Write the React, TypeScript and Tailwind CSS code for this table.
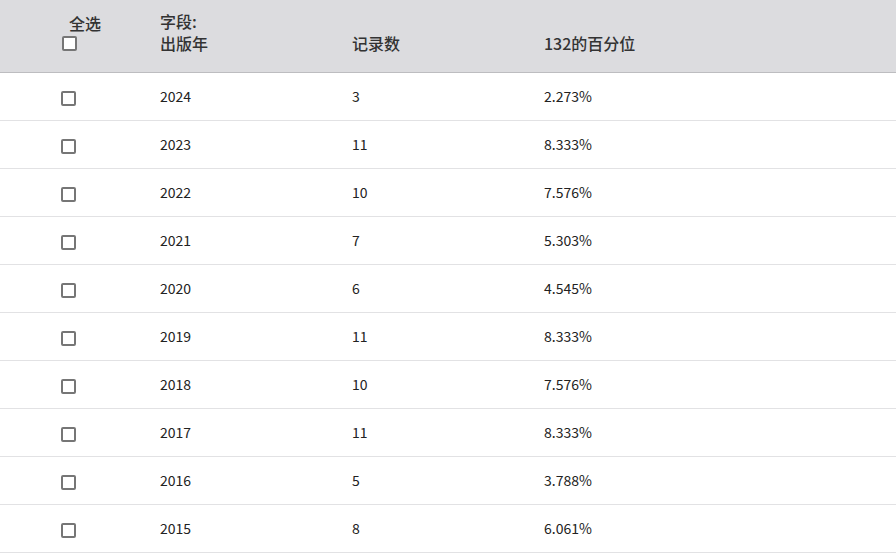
const rows = [
  { year: '2024', count: '3', pct: '2.273%' },
  { year: '2023', count: '11', pct: '8.333%' },
  { year: '2022', count: '10', pct: '7.576%' },
  { year: '2021', count: '7', pct: '5.303%' },
  { year: '2020', count: '6', pct: '4.545%' },
  { year: '2019', count: '11', pct: '8.333%' },
  { year: '2018', count: '10', pct: '7.576%' },
  { year: '2017', count: '11', pct: '8.333%' },
  { year: '2016', count: '5', pct: '3.788%' },
  { year: '2015', count: '8', pct: '6.061%' },
];

function Box() {
  return <span className="block w-[15px] h-[15px] border-2 border-[#767676] rounded-[2px] bg-white" />;
}

export default function App() {
  return (
    <div className="w-full bg-white text-[#222] font-['Noto_Sans_CJK_SC','Noto_Sans',sans-serif]">
      {/* header */}
      <div className="grid grid-cols-[160px_192px_192px_1fr] h-[73px] bg-[#dcdcdf] border-b border-[#bdbdc0] text-[16px] leading-[22px] font-medium text-[#333]">
        <div className="pt-[12px]">
          <div className="pl-[69px]">全选</div>
          <div className="ml-[62px] mt-[2px]">
            <Box />
          </div>
        </div>
        <div className="pt-[10px]">
          <div>字段:</div>
          <div>出版年</div>
        </div>
        <div className="pt-[32px]">记录数</div>
        <div className="pt-[32px]">132的百分位</div>
      </div>

      {/* rows */}
      {rows.map((r) => (
        <div
          key={r.year}
          className="grid grid-cols-[160px_192px_192px_1fr] items-center h-[48px] border-b border-[#e2e2e4] text-[14px]"
        >
          <div className="pl-[61px] pt-[3px]">
            <Box />
          </div>
          <div>{r.year}</div>
          <div>{r.count}</div>
          <div>{r.pct}</div>
        </div>
      ))}
    </div>
  );
}
